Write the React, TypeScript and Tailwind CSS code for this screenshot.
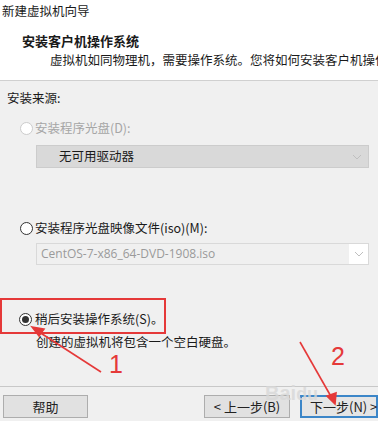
import React from "react";

const font = {
	fontFamily: '"Noto Sans CJK SC", "Microsoft YaHei", sans-serif',
};

function Radio({ checked, disabled }: { checked?: boolean; disabled?: boolean }) {
	return (
		<span
			className={
				"inline-flex h-[13px] w-[13px] shrink-0 items-center justify-center rounded-full border bg-white " +
				(disabled ? "border-[#cccccc]" : "border-[#333333]")
			}
		>
			{checked && <span className="h-[7px] w-[7px] rounded-full bg-[#333333]" />}
		</span>
	);
}

function Chevron() {
	return (
		<svg width="10" height="6" viewBox="0 0 10 6" fill="none">
			<path d="M1 1l4 4 4-4" stroke="#bfbfbf" strokeWidth="1" />
		</svg>
	);
}

function Button({
	children,
	focused,
	className = "",
}: {
	children: React.ReactNode;
	focused?: boolean;
	className?: string;
}) {
	return (
		<div
			className={
				"flex h-[23px] items-center justify-center text-[13px] text-[#222] " +
				(focused
					? "border-2 border-[#3c86c8] bg-[#e5e5e5] "
					: "border border-[#adadad] bg-[#e1e1e1] ") +
				className
			}
		>
			{children}
		</div>
	);
}

export default function App() {
	return (
		<div
			className="relative flex h-[421px] w-[378px] flex-col overflow-hidden bg-[#f0f0f0] text-[#1a1a1a]"
			style={font}
		>
			<div className="flex h-[81px] flex-col border-[#d0d0d0] border-b bg-white">
				<div className="pl-[2px] pt-[2px] text-[12.5px] leading-[18px]">
					新建虚拟机向导
				</div>
				<div className="pl-[22px] pt-[12px] font-bold text-[13px] leading-[18px]">
					安装客户机操作系统
				</div>
				<div className="whitespace-nowrap pl-[50px] pt-[1px] text-[12.5px] leading-[18px]">
					虚拟机如同物理机，需要操作系统。您将如何安装客户机操作系统？
				</div>
			</div>

			<div className="flex flex-1 flex-col">
				<div className="pl-[7px] pt-[8px] text-[12.5px] leading-[18px]">
					安装来源:
				</div>

				<div className="flex items-center gap-[2px] pl-[20px] pt-[12px] text-[12.5px] leading-[18px] text-[#a6a6a6]">
					<Radio disabled />
					<span>安装程序光盘(D):</span>
				</div>
				<div className="ml-[36px] mt-[8px] flex h-[23px] w-[333px] items-center justify-between border border-[#cccccc] bg-[#d9d9d9] pl-[22px] pr-[6px] text-[12.5px]">
					<span>无可用驱动器</span>
					<Chevron />
				</div>

				<div className="flex items-center gap-[2px] pl-[20px] pt-[51px] text-[12.5px] leading-[18px]">
					<Radio />
					<span>安装程序光盘映像文件(iso)(M):</span>
				</div>
				<div className="ml-[36px] mt-[6px] flex h-[22px] w-[333px] items-center border border-[#d9d9d9] bg-white">
					<div
						className="flex h-full flex-1 items-center bg-[#f0f0f0] pl-[4px] text-[12px] text-[#9a9a9a]"
						style={{ fontFamily: '"Open Sans", "Noto Sans", sans-serif' }}
					>
						CentOS-7-x86_64-DVD-1908.iso
					</div>
					<div className="flex w-[19px] justify-center">
						<Chevron />
					</div>
				</div>

				<div className="flex items-center gap-[3px] pl-[19px] pt-[45px] text-[12.5px] leading-[18px]">
					<Radio checked />
					<span>稍后安装操作系统(S)。</span>
				</div>
				<div className="pl-[36px] pt-[5px] text-[12.5px] leading-[18px]">
					创建的虚拟机将包含一个空白硬盘。
				</div>

				<div className="mt-auto flex h-[35px] items-start border-[#c8c8c8] border-t pt-[8px]">
					<Button className="ml-[3px] w-[85px]">帮助</Button>
					<div className="flex-1" />
					<Button className="w-[86px]">&lt; 上一步(B)</Button>
					<Button focused className="ml-[10px] w-[78px] justify-start pl-[8px]">
						<span className="whitespace-nowrap">下一步(N) &gt;</span>
					</Button>
				</div>
			</div>

			{/* annotations */}
			<div className="pointer-events-none absolute left-0 top-[298px] h-[36px] w-[166px] border-2 border-[#e53939]" />
			<div
				className="pointer-events-none absolute left-[265px] top-[378px] font-bold text-[20px] text-[#d8d8d8] opacity-80"
				style={{ fontFamily: '"Liberation Sans", sans-serif' }}
			>
				Bai<span className="text-[18px]">du</span>
			</div>
			<svg
				className="pointer-events-none absolute left-0 top-0"
				width="378"
				height="421"
				viewBox="0 0 378 421"
			>
				<g stroke="#e53939" strokeWidth="1.6" fill="#e53939">
					<line x1="101" y1="372" x2="36" y2="330" />
					<polygon points="32,327 44,329 39,336" />
					<line x1="300" y1="342" x2="333" y2="400" />
					<polygon points="335,404 327,396 336,393" />
				</g>
			</svg>
			<div
				className="pointer-events-none absolute left-[109px] top-[349px] text-[25px] leading-[30px] text-[#e53939]"
				style={{ fontFamily: '"Liberation Sans", sans-serif' }}
			>
				1
			</div>
			<div
				className="pointer-events-none absolute left-[331px] top-[341px] text-[25px] leading-[30px] text-[#e53939]"
				style={{ fontFamily: '"Liberation Sans", sans-serif' }}
			>
				2
			</div>
		</div>
	);
}
